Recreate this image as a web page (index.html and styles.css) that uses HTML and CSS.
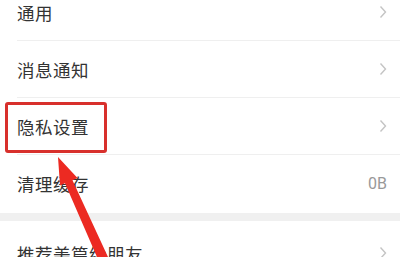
FILE: index.html
```html
<!DOCTYPE html>
<html lang="zh-CN">
<head>
<meta charset="UTF-8">
<meta name="viewport" content="width=device-width, initial-scale=1.0">
<title>设置</title>
<link rel="stylesheet" href="styles.css">
</head>
<body>

<div id="settings">
  <div class="group">
    <div class="row">
      <span class="label">通用</span>
      <span class="chevron"><svg width="8" height="14" viewBox="0 0 8 14"><path d="M1.5 1.5 L6.5 7 L1.5 12.5" fill="none" stroke="#c4c4c4" stroke-width="1.4"/></svg></span>
    </div>
    <div class="row">
      <span class="label">消息通知</span>
      <span class="chevron"><svg width="8" height="14" viewBox="0 0 8 14"><path d="M1.5 1.5 L6.5 7 L1.5 12.5" fill="none" stroke="#c4c4c4" stroke-width="1.4"/></svg></span>
    </div>
    <div class="row">
      <span class="label">隐私设置</span>
      <span class="chevron"><svg width="8" height="14" viewBox="0 0 8 14"><path d="M1.5 1.5 L6.5 7 L1.5 12.5" fill="none" stroke="#c4c4c4" stroke-width="1.4"/></svg></span>
    </div>
    <div class="row last">
      <span class="label">清理缓存</span>
      <span class="value">0B</span>
    </div>
  </div>
  <div class="gap"></div>
  <div class="group">
    <div class="row lower">
      <span class="label">推荐美篇给朋友</span>
      <span class="chevron"><svg width="8" height="14" viewBox="0 0 8 14"><path d="M1.5 1.5 L6.5 7 L1.5 12.5" fill="none" stroke="#c4c4c4" stroke-width="1.4"/></svg></span>
    </div>
  </div>
</div>

<!-- annotation -->
<div class="mark-box"></div>
<svg class="mark-arrow" width="400" height="257" viewBox="0 0 400 257">
  <path d="M58 157 L77.5 178 L72.5 180.2 L108 257 L97 257 L65 183.3 L60 185.5 Z" fill="#ec2a22"/>
</svg>

</body>
</html>
```

FILE: styles.css
```css
body {
  margin: 0;
  padding: 0;
  background-color: #fff;
  font-family: "Noto Sans CJK SC", "Noto Sans", sans-serif;
  color: #333;
  overflow: hidden;
  height: 257px;
}
#settings {
  margin-top: -16px;
}
.row {
  display: flex;
  align-items: center;
  justify-content: space-between;
  height: 56px;
  margin-left: 17px;
  padding-right: 13px;
  border-bottom: 1px solid #efefef;
}
.row.last {
  border-bottom-color: transparent;
  height: 57px;
}
.row.lower {
  padding-top: 4px;
}
.label {
  font-size: 17.5px;
  letter-spacing: 0.5px;
}
.chevron {
  display: flex;
}
.value {
  font-size: 16px;
  color: #999;
  font-family: "Roboto", sans-serif;
}
.gap {
  height: 8px;
  background-color: #f0f0f0;
}
.mark-box {
  position: absolute;
  left: 5px;
  top: 102px;
  width: 96px;
  height: 45px;
  border: 3px solid #d8302c;
  border-radius: 3px;
}
.mark-arrow {
  position: absolute;
  left: 0;
  top: 0;
}
```
